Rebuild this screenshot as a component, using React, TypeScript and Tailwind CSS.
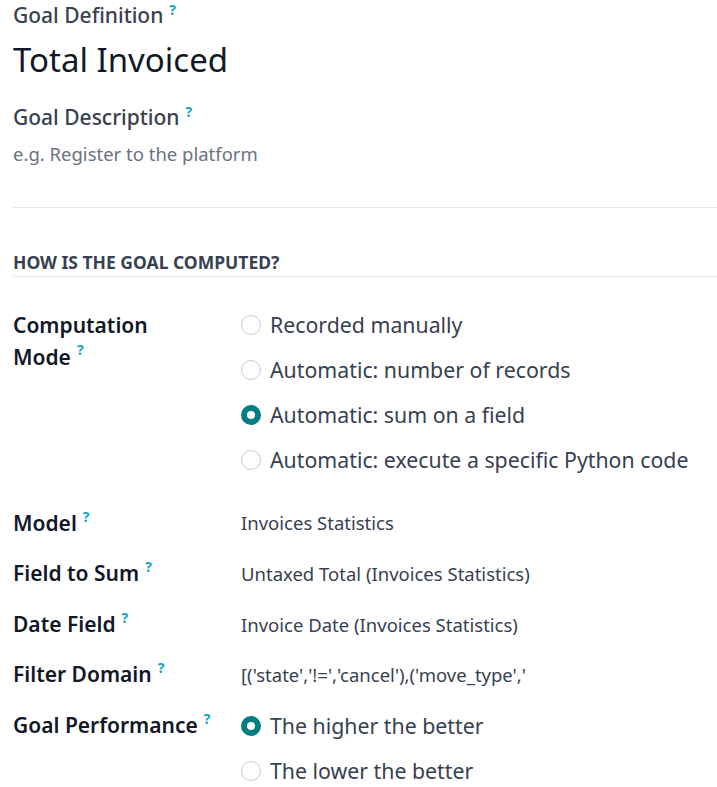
const Help = () => (
  <span className="ml-1.5 align-top text-[14px] leading-none font-bold text-[#0ea5c6] relative top-0.5">?</span>
);

function Radio({ checked, label }: { checked?: boolean; label: string }) {
  return (
    <div className="flex items-center gap-[9px] h-[45px]">
      {checked ? (
        <span className="w-5 h-5 rounded-full border-[6px] border-[#017e84] bg-white shrink-0" />
      ) : (
        <span className="w-5 h-5 rounded-full border border-[#c9ccd0] bg-white shrink-0" />
      )}
      <span className="text-[21.3px] text-[#374151]">{label}</span>
    </div>
  );
}

function Row({ label, children }: { label: string; children: React.ReactNode }) {
  return (
    <div className="flex items-center h-[50.6px]">
      <div className="w-[228px] text-[21px] font-semibold text-[#111827]">
        {label}
        <Help />
      </div>
      <div className="text-[18.5px] text-[#374151]">{children}</div>
    </div>
  );
}

export default function App() {
  return (
    <div className="bg-white min-h-[787px] pl-[13px] font-['Noto_Sans',sans-serif]">
      <div className="pt-px text-[21px] leading-[28px] font-medium text-[#374151]">
        Goal Definition
        <Help />
      </div>
      <div className="mt-[9px] text-[33px] leading-[44px] text-[#111827]">Total Invoiced</div>
      <div className="mt-[21px] text-[21px] leading-[28px] font-medium text-[#374151]">
        Goal Description
        <Help />
      </div>
      <div className="mt-[10px] text-[18.5px] leading-[26px] text-[#6b7280]">
        e.g. Register to the platform
      </div>

      <div className="mt-10 border-t border-[#e5e7eb]" />

      <div className="mt-[42px] pb-0.5 leading-[24px] border-b border-[#e5e7eb] text-[17.5px] font-bold text-[#374151] uppercase">
        How is the goal computed?
      </div>

      <div className="flex mt-8">
        <div className="w-[228px] text-[21px] font-semibold text-[#111827] leading-[32px]">
          Computation
          <br />
          Mode
          <Help />
        </div>
        <div className="flex flex-col -mt-[7px]">
          <Radio label="Recorded manually" />
          <Radio label="Automatic: number of records" />
          <Radio checked label="Automatic: sum on a field" />
          <Radio label="Automatic: execute a specific Python code" />
        </div>
      </div>

      <div className="mt-4">
        <Row label="Model">Invoices Statistics</Row>
        <Row label="Field to Sum">Untaxed Total (Invoices Statistics)</Row>
        <Row label="Date Field">Invoice Date (Invoices Statistics)</Row>
        <Row label="Filter Domain">[('state','!=','cancel'),('move_type','</Row>
        <div className="flex">
          <div className="w-[228px] text-[21px] font-semibold text-[#111827] h-[50px] flex items-center">
            <span>
              Goal Performance
              <Help />
            </span>
          </div>
          <div className="flex flex-col mt-[3px]">
            <Radio checked label="The higher the better" />
            <Radio label="The lower the better" />
          </div>
        </div>
      </div>
    </div>
  );
}
